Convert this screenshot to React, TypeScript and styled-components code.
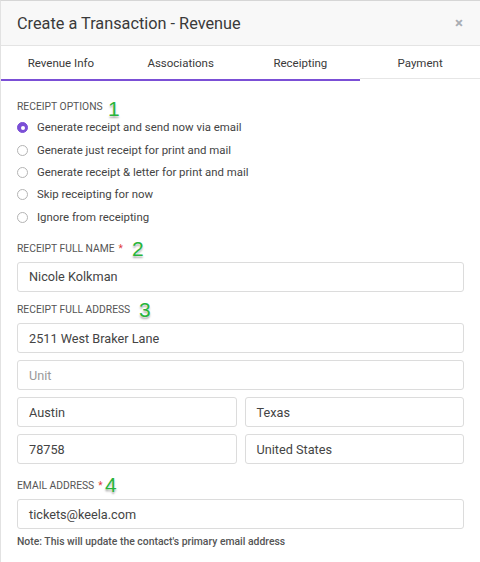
import React from "react";
import styled, { createGlobalStyle } from "styled-components";

const Global = createGlobalStyle`
  html, body { margin: 0; padding: 0; background: #fff; }
  body { font-family: Roboto, "Liberation Sans", Arial, sans-serif; color: #333; }
  * { box-sizing: border-box; }
`;

const Modal = styled.div`
  width: 480px;
  height: 562px;
  border-top: 1px solid #d6d6d6;
  border-left: 1px solid #e2e2e2;
  background: #fff;
  overflow: hidden;
`;

const Header = styled.div`
  height: 45px;
  background: #f8f8f8;
  border-bottom: 1px solid #e4e4e4;
  display: flex;
  align-items: center;
  justify-content: space-between;
  padding: 0 17px 0 16px;
`;

const Title = styled.h1`
  margin: 0;
  font-size: 16.3px;
  font-weight: 400;
  color: #3a3a3a;
`;

const Close = styled.span`
  font-size: 15px;
  font-weight: 700;
  color: #a9adb4;
  line-height: 1;
`;

const Tabs = styled.div`
  display: grid;
  grid-template-columns: repeat(4, 1fr);
  height: 35px;
`;

const Tab = styled.div<{ $done: boolean }>`
  display: flex;
  align-items: center;
  justify-content: center;
  font-size: 11.5px;
  color: #3a3a3a;
  border-bottom: 2px solid ${(p) => (p.$done ? "#7b4fd6" : "transparent")};
  box-shadow: ${(p) => (p.$done ? "none" : "inset 0 -1px 0 #e6e6e6")};
`;

const Body = styled.div`
  padding: 20px 16px 0 16px;
`;

const Label = styled.div<{ $mt?: number }>`
  position: relative;
  font-size: 10.3px;
  line-height: 12px;
  font-weight: 400;
  color: #555;
  text-transform: uppercase;
  margin-top: ${(p) => p.$mt ?? 0}px;
  margin-bottom: 7px;
  display: flex;
  align-items: flex-start;
  gap: 4px;
`;

const Req = styled.span`
  color: #e03b3b;
  font-size: 10px;
`;

const Marker = styled.span<{ $x: number; $y: number }>`
  position: absolute;
  left: ${(p) => p.$x}px;
  top: ${(p) => p.$y}px;
  font-family: "Liberation Sans", Arial, sans-serif;
  font-size: 21px;
  line-height: 21px;
  color: #27b43b;
  text-shadow: 0 0 2px #fff, 0 2px 2px rgba(0, 0, 0, 0.35);
`;

const Radios = styled.div`
  display: flex;
  flex-direction: column;
  margin-top: -4px;
`;

const RadioRow = styled.label`
  display: flex;
  align-items: center;
  gap: 9px;
  height: 22.4px;
  font-size: 11.4px;
  color: #444;
`;

const Dot = styled.span<{ $on: boolean }>`
  width: 11px;
  height: 11px;
  border-radius: 50%;
  flex: none;
  margin-top: 1px;
  background: ${(p) => (p.$on ? "#7b4fd6" : "#fff")};
  border: 1px solid ${(p) => (p.$on ? "#7b4fd6" : "#b4b4b4")};
  display: flex;
  align-items: center;
  justify-content: center;
  &::after {
    content: "";
    width: 4px;
    height: 4px;
    border-radius: 50%;
    background: #fff;
    display: ${(p) => (p.$on ? "block" : "none")};
  }
`;

const Stack = styled.div`
  display: flex;
  flex-direction: column;
  gap: 7px;
`;

const Row = styled.div`
  display: grid;
  grid-template-columns: 1fr 1fr;
  gap: 8px;
`;

const Input = styled.div<{ $placeholder?: boolean }>`
  height: 30px;
  border: 1px solid #dcdcdc;
  border-radius: 3px;
  display: flex;
  align-items: center;
  padding: 0 11px;
  font-size: 12.7px;
  color: ${(p) => (p.$placeholder ? "#9a9a9a" : "#444")};
  background: #fff;
`;

const Note = styled.div`
  margin-top: 6px;
  font-size: 10.4px;
  font-weight: 500;
  color: #555;
`;

const options = [
  "Generate receipt and send now via email",
  "Generate just receipt for print and mail",
  "Generate receipt & letter for print and mail",
  "Skip receipting for now",
  "Ignore from receipting",
];

const tabs = ["Revenue Info", "Associations", "Receipting", "Payment"];

export default function App() {
  return (
    <>
      <Global />
      <Modal>
        <Header>
          <Title>Create a Transaction - Revenue</Title>
          <Close>×</Close>
        </Header>
        <Tabs>
          {tabs.map((t, i) => (
            <Tab key={t} $done={i < 3}>
              {t}
            </Tab>
          ))}
        </Tabs>
        <Body>
          <Label>
            Receipt Options
            <Marker $x={91} $y={-3}>1</Marker>
          </Label>
          <Radios>
            {options.map((o, i) => (
              <RadioRow key={o}>
                <Dot $on={i === 0} />
                {o}
              </RadioRow>
            ))}
          </Radios>
          <Label $mt={15}>
            Receipt Full Name <Req>*</Req>
            <Marker $x={115} $y={-5}>2</Marker>
          </Label>
          <Input>Nicole Kolkman</Input>
          <Label $mt={12.5}>
            Receipt Full Address
            <Marker $x={122} $y={-5}>3</Marker>
          </Label>
          <Stack>
            <Input>2511 West Braker Lane</Input>
            <Input $placeholder>Unit</Input>
            <Row>
              <Input>Austin</Input>
              <Input>Texas</Input>
            </Row>
            <Row>
              <Input>78758</Input>
              <Input>United States</Input>
            </Row>
          </Stack>
          <Label $mt={16}>
            Email Address <Req>*</Req>
            <Marker $x={88} $y={-6}>4</Marker>
          </Label>
          <Input>tickets@keela.com</Input>
          <Note>Note: This will update the contact's primary email address</Note>
        </Body>
      </Modal>
    </>
  );
}
